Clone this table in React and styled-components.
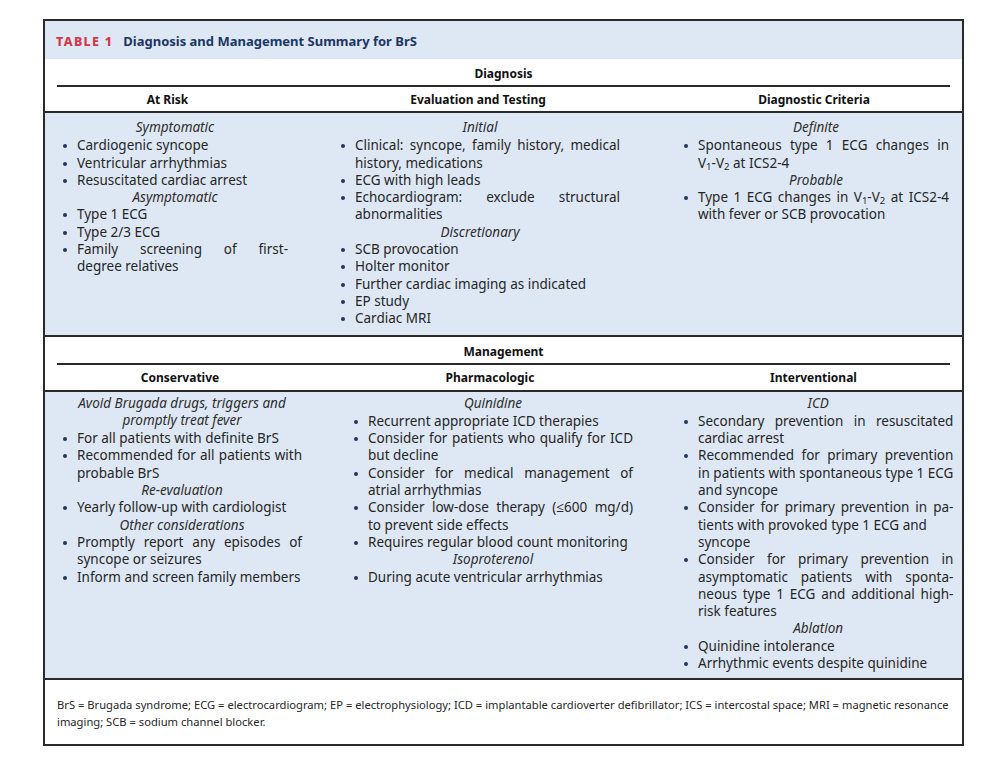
import React from "react";
import styled, { createGlobalStyle } from "styled-components";

const Global = createGlobalStyle`
  html, body { margin: 0; padding: 0; background: #fff; }
  body { font-family: "Noto Sans", "Open Sans", "Liberation Sans", sans-serif; color: #262626; }
  * { box-sizing: border-box; }
`;

const Page = styled.div`
  padding: 19px 0 20px 43px;
`;

const Table = styled.section`
  width: 921px;
  border: 2px solid #2a2a2a;
  background: #fff;
`;

const TitleBar = styled.div`
  height: 38px;
  background: #dde8f4;
  display: flex;
  align-items: center;
  gap: 10px;
  padding: 2px 0 0 11px;
  font-weight: 700;
`;

const TableNo = styled.span`
  color: #d4364b;
  font-size: 12.5px;
  letter-spacing: 1.3px;
  font-weight: 800;
`;

const TitleText = styled.span`
  color: #1c3563;
  font-size: 13px;
`;

const SectionLabel = styled.div`
  height: ${(p) => p.$h}px;
  display: flex;
  align-items: center;
  justify-content: center;
  padding-top: ${(p) => p.$pt}px;
  margin: 0 12px;
  border-bottom: 2px solid #2a2a2a;
  font-weight: 700;
  font-size: 12px;
  color: #111;
`;

const HeadRow = styled.div`
  display: grid;
  grid-template-columns: ${(p) => p.$cols};
  height: ${(p) => p.$h}px;
  border-bottom: 2px solid #2a2a2a;
`;

const ColHead = styled.div`
  display: flex;
  align-items: center;
  justify-content: center;
  padding-top: 1px;
  font-weight: 700;
  font-size: 12px;
  color: #111;
`;

const Body = styled.div`
  display: grid;
  grid-template-columns: ${(p) => p.$cols};
  background: #dde8f4;
  border-bottom: 2px solid #2a2a2a;
`;

const Cell = styled.div`
  padding: ${(p) => p.$pad};
  font-size: 13.5px;
  line-height: 17.3px;
  color: #262626;
`;

const Sub = styled.div`
  font-style: italic;
  text-align: center;
  color: #2e2e2e;
  margin-bottom: ${(p) => (p.$first ? 1 : 0)}px;
`;

const List = styled.ul`
  list-style: none;
  margin: 0;
  padding: 0;
`;

const Item = styled.li`
  position: relative;
  padding-left: 15px;
  &::before {
    content: "";
    position: absolute;
    left: 1px;
    top: 7px;
    width: 4px;
    height: 4px;
    border-radius: 50%;
    background: #24355e;
  }
`;

const Line = styled.span`
  display: block;
  text-align: ${(p) => (p.$j ? "justify" : "left")};
  text-align-last: ${(p) => (p.$j ? "justify" : "auto")};
  white-space: nowrap;
`;

const Sb = styled.sub`
  font-size: 9.5px;
  vertical-align: -2px;
  line-height: 0;
`;

const Footer = styled.div`
  padding: 16px 12px 14px 12px;
  font-size: 11.2px;
  line-height: 17px;
  color: #262626;
`;

const FootLine = styled.span`
  display: block;
  white-space: nowrap;
`;

const V12 = () => (
  <>
    V<Sb>1</Sb>-V<Sb>2</Sb>
  </>
);

/* content: each entry is either {s: [...lines]} subheading or {i: [...lines]} item.
   a line is a string or {t, nj} where nj means not justified */

const diagnosis = [
  [
    { s: ["Symptomatic"] },
    { i: ["Cardiogenic syncope"] },
    { i: ["Ventricular arrhythmias"] },
    { i: ["Resuscitated cardiac arrest"] },
    { s: ["Asymptomatic"] },
    { i: ["Type 1 ECG"] },
    { i: ["Type 2/3 ECG"] },
    { i: ["Family screening of first-", "degree relatives"] },
  ],
  [
    { s: ["Initial"] },
    { i: ["Clinical: syncope, family history, medical", "history, medications"] },
    { i: ["ECG with high leads"] },
    { i: ["Echocardiogram: exclude structural", "abnormalities"] },
    { s: ["Discretionary"] },
    { i: ["SCB provocation"] },
    { i: ["Holter monitor"] },
    { i: ["Further cardiac imaging as indicated"] },
    { i: ["EP study"] },
    { i: ["Cardiac MRI"] },
  ],
  [
    { s: ["Definite"] },
    {
      i: [
        "Spontaneous type 1 ECG changes in",
        <>
          <V12 /> at ICS2-4
        </>,
      ],
    },
    { s: ["Probable"] },
    {
      i: [
        <>
          Type 1 ECG changes in <V12 /> at ICS2-4
        </>,
        "with fever or SCB provocation",
      ],
    },
  ],
];

const management = [
  [
    { s: ["Avoid Brugada drugs, triggers and", "promptly treat fever"] },
    { i: ["For all patients with definite BrS"] },
    { i: ["Recommended for all patients with", "probable BrS"] },
    { s: ["Re-evaluation"] },
    { i: ["Yearly follow-up with cardiologist"] },
    { s: ["Other considerations"] },
    { i: ["Promptly report any episodes of", "syncope or seizures"] },
    { i: ["Inform and screen family members"] },
  ],
  [
    { s: ["Quinidine"] },
    { i: ["Recurrent appropriate ICD therapies"] },
    { i: ["Consider for patients who qualify for ICD", "but decline"] },
    { i: ["Consider for medical management of", "atrial arrhythmias"] },
    { i: ["Consider low-dose therapy (\u2264600 mg/d)", "to prevent side effects"] },
    { i: ["Requires regular blood count monitoring"] },
    { s: ["Isoproterenol"] },
    { i: ["During acute ventricular arrhythmias"] },
  ],
  [
    { s: ["ICD"] },
    { i: ["Secondary prevention in resuscitated", "cardiac arrest"] },
    {
      i: [
        "Recommended for primary prevention",
        "in patients with spontaneous type 1 ECG",
        "and syncope",
      ],
    },
    {
      i: [
        "Consider for primary prevention in pa-",
        { t: "tients with provoked type 1 ECG and", nj: true },
        "syncope",
      ],
    },
    {
      i: [
        "Consider for primary prevention in",
        "asymptomatic patients with sponta-",
        "neous type 1 ECG and additional high-",
        "risk features",
      ],
    },
    { s: ["Ablation"] },
    { i: ["Quinidine intolerance"] },
    { i: ["Arrhythmic events despite quinidine"] },
  ],
];

const renderLines = (lines, justify) =>
  lines.map((ln, k) => {
    const isObj = ln && typeof ln === "object" && "t" in ln;
    const content = isObj ? ln.t : ln;
    const last = k === lines.length - 1;
    const j = justify && !last && !(isObj && ln.nj);
    return (
      <Line key={k} $j={j}>
        {content}
      </Line>
    );
  });

function Column({ entries, pad }) {
  const blocks = [];
  let group = [];
  const flush = (key) => {
    if (group.length) {
      blocks.push(<List key={"l" + key}>{group}</List>);
      group = [];
    }
  };
  entries.forEach((e, idx) => {
    if (e.s) {
      flush(idx);
      blocks.push(
        <Sub key={"s" + idx} $first={idx === 0}>
          {e.s.map((t, k) => (
            <div key={k}>{t}</div>
          ))}
        </Sub>
      );
    } else {
      group.push(<Item key={idx}>{renderLines(e.i, true)}</Item>);
    }
  });
  flush("end");
  return <Cell $pad={pad}>{blocks}</Cell>;
}

const diagCols = "245px 376px 1fr";
const mgmtCols = "270px 350px 1fr";

const diagPads = ["6px 2px 7px 17px", "6px 46px 7px 50px", "6px 13px 7px 17px"];
const mgmtPads = ["3px 13px 6px 17px", "3px 32px 6px 38px", "3px 14px 6px 18px"];

export default function App() {
  return (
    <>
      <Global />
      <Page>
        <Table>
          <TitleBar>
            <TableNo>TABLE 1</TableNo>
            <TitleText>Diagnosis and Management Summary for BrS</TitleText>
          </TitleBar>

          <SectionLabel $h={28} $pt={2}>Diagnosis</SectionLabel>
          <HeadRow $cols={diagCols} $h={26}>
            <ColHead>At Risk</ColHead>
            <ColHead>Evaluation and Testing</ColHead>
            <ColHead>Diagnostic Criteria</ColHead>
          </HeadRow>
          <Body $cols={diagCols}>
            {diagnosis.map((c, i) => (
              <Column key={i} entries={c} pad={diagPads[i]} />
            ))}
          </Body>

          <SectionLabel $h={28} $pt={3}>Management</SectionLabel>
          <HeadRow $cols={mgmtCols} $h={27}>
            <ColHead>Conservative</ColHead>
            <ColHead>Pharmacologic</ColHead>
            <ColHead>Interventional</ColHead>
          </HeadRow>
          <Body $cols={mgmtCols}>
            {management.map((c, i) => (
              <Column key={i} entries={c} pad={mgmtPads[i]} />
            ))}
          </Body>

          <Footer>
            <FootLine>
              BrS = Brugada syndrome; ECG = electrocardiogram; EP = electrophysiology; ICD = implantable
              cardioverter defibrillator; ICS = intercostal space; MRI = magnetic resonance
            </FootLine>
            <FootLine>imaging; SCB = sodium channel blocker.</FootLine>
          </Footer>
        </Table>
      </Page>
    </>
  );
}
